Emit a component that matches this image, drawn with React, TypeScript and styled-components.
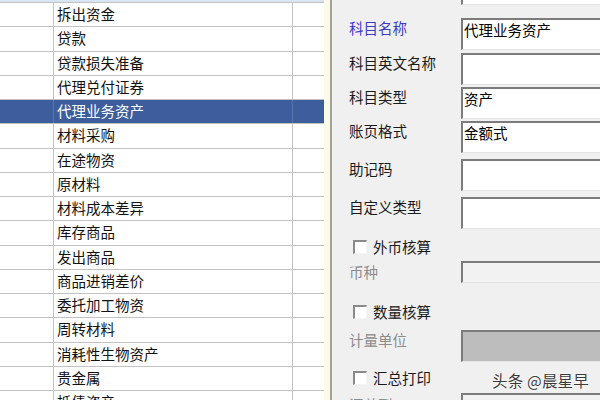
import React from "react";
import styled, { createGlobalStyle } from "styled-components";

const Global = createGlobalStyle`
  html, body { margin: 0; padding: 0; background: #f0f0f0; }
  body { font-family: "Noto Sans CJK SC", "Noto Sans", sans-serif; }
`;

const Screen = styled.div`
  position: relative;
  width: 600px;
  height: 400px;
  overflow: hidden;
  display: flex;
  background: #f0f0f0;
  font-family: "Noto Sans CJK SC", "Noto Sans", sans-serif;
`;

const Table = styled.div`
  width: 324px;
  flex: none;
  background: #ffffff;
  display: flex;
  flex-direction: column;
`;

const TopStrip = styled.div`
  height: 3px;
  flex: none;
  box-sizing: border-box;
  background: #d8e5f4;
  border-bottom: 1px solid #c2c2c2;
`;

const Row = styled.div<{ $selected?: boolean }>`
  height: 24.25px;
  flex: none;
  box-sizing: border-box;
  display: grid;
  grid-template-columns: 54px 239px 1fr;
  border-bottom: 1px solid #c2c2c2;
  background: ${(p) => (p.$selected ? "#3d5d9c" : "#ffffff")};
  color: ${(p) => (p.$selected ? "#ffffff" : "#111111")};
`;

const Cell = styled.div<{ $selected?: boolean }>`
  box-sizing: border-box;
  border-right: 1px solid ${(p) => (p.$selected ? "#5c77ab" : "#c2c2c2")};
  padding-left: 3px;
  font-size: 14.5px;
  line-height: 22px;
  white-space: nowrap;
  overflow: hidden;
  &:last-child { border-right: none; }
`;

const Splitter = styled.div`
  width: 6px;
  flex: none;
  background: #fbfbe9;
  border-right: 2px solid #a2a294;
`;

const Panel = styled.div`
  flex: 1;
  display: flex;
  flex-direction: column;
  padding-left: 17px;
  min-width: 0;
`;

const FieldRow = styled.div<{ $mt: number; $h?: number }>`
  display: grid;
  grid-template-columns: 112px 220px;
  align-items: center;
  margin-top: ${(p) => p.$mt}px;
  height: ${(p) => p.$h ?? 23}px;
  flex: none;
`;

const Label = styled.div<{ $tone?: "normal" | "active" | "muted"; $lift?: boolean }>`
  font-size: 14.5px;
  line-height: 20px;
  white-space: nowrap;
  padding-bottom: ${(p) => (p.$lift ? 12 : 0)}px;
  color: ${(p) =>
    p.$tone === "active" ? "#3b3bc4" : p.$tone === "muted" ? "#8c8c8c" : "#1a1a1a"};
`;

const Input = styled.div<{ $fill?: "white" | "panel" | "grey" }>`
  box-sizing: border-box;
  height: 100%;
  border-style: solid;
  border-width: 2px 1px 1px 2px;
  border-color: #7c7c7c #e4e4e4 #e4e4e4 #7c7c7c;
  background: ${(p) =>
    p.$fill === "grey" ? "#bdbdbd" : p.$fill === "panel" ? "#f2f2f2" : "#ffffff"};
  padding-left: 1px;
  font-size: 14.5px;
  line-height: 19px;
  color: #000000;
  white-space: nowrap;
  overflow: hidden;
`;

const CheckRow = styled.div<{ $mt: number }>`
  display: flex;
  align-items: center;
  gap: 6px;
  height: 20px;
  flex: none;
  margin-top: ${(p) => p.$mt}px;
  padding-left: 4px;
`;

const Box = styled.span`
  box-sizing: border-box;
  width: 14px;
  height: 14px;
  flex: none;
  background: #ffffff;
  border-style: solid;
  border-width: 2px 1px 1px 2px;
  border-color: #8a8a8a #f4f4f4 #f4f4f4 #8a8a8a;
`;

const CheckText = styled.span`
  font-size: 14.5px;
  color: #1a1a1a;
  line-height: 20px;
`;

const Watermark = styled.div`
  position: absolute;
  right: 11px;
  bottom: 9px;
  font-size: 15.5px;
  color: #3a3a3a;
  letter-spacing: 0.2px;
  text-shadow: 0 0 2px #ffffff, 0 0 2px #ffffff;
  font-family: "Noto Sans CJK SC", sans-serif;
`;

const rows = [
  "拆出资金",
  "贷款",
  "贷款损失准备",
  "代理兑付证券",
  "代理业务资产",
  "材料采购",
  "在途物资",
  "原材料",
  "材料成本差异",
  "库存商品",
  "发出商品",
  "商品进销差价",
  "委托加工物资",
  "周转材料",
  "消耗性生物资产",
  "贵金属",
  "抵债资产",
];

export default function App() {
  return (
    <>
      <Global />
      <Screen>
        <Table>
          <TopStrip />
          {rows.map((name, i) => {
            const sel = i === 4;
            return (
              <Row key={name} $selected={sel}>
                <Cell $selected={sel} />
                <Cell $selected={sel}>{name}</Cell>
                <Cell $selected={sel} />
              </Row>
            );
          })}
        </Table>
        <Splitter />
        <Panel>
          <FieldRow $mt={-18}>
            <Label />
            <Input />
          </FieldRow>
          <FieldRow $mt={12.5}>
            <Label $tone="active" $lift>科目名称</Label>
            <Input>代理业务资产</Input>
          </FieldRow>
          <FieldRow $mt={12.5}>
            <Label $lift>科目英文名称</Label>
            <Input />
          </FieldRow>
          <FieldRow $mt={11}>
            <Label $lift>科目类型</Label>
            <Input>资产</Input>
          </FieldRow>
          <FieldRow $mt={11}>
            <Label $lift>账页格式</Label>
            <Input>金额式</Input>
          </FieldRow>
          <FieldRow $mt={15}>
            <Label $lift>助记码</Label>
            <Input />
          </FieldRow>
          <FieldRow $mt={15}>
            <Label $lift>自定义类型</Label>
            <Input />
          </FieldRow>
          <CheckRow $mt={17}>
            <Box />
            <CheckText>外币核算</CheckText>
          </CheckRow>
          <FieldRow $mt={4} $h={22}>
            <Label $tone="muted">币种</Label>
            <Input $fill="panel" />
          </FieldRow>
          <CheckRow $mt={18.5}>
            <Box />
            <CheckText>数量核算</CheckText>
          </CheckRow>
          <FieldRow $mt={8.5} $h={21}>
            <Label $tone="muted" $lift>计量单位</Label>
            <Input $fill="grey" />
          </FieldRow>
          <CheckRow $mt={17}>
            <Box />
            <CheckText>汇总打印</CheckText>
          </CheckRow>
          <FieldRow $mt={5}>
            <Label $tone="muted">汇总到</Label>
            <Input $fill="panel" />
          </FieldRow>
        </Panel>
        <Watermark>头条 @晨星早</Watermark>
      </Screen>
    </>
  );
}
